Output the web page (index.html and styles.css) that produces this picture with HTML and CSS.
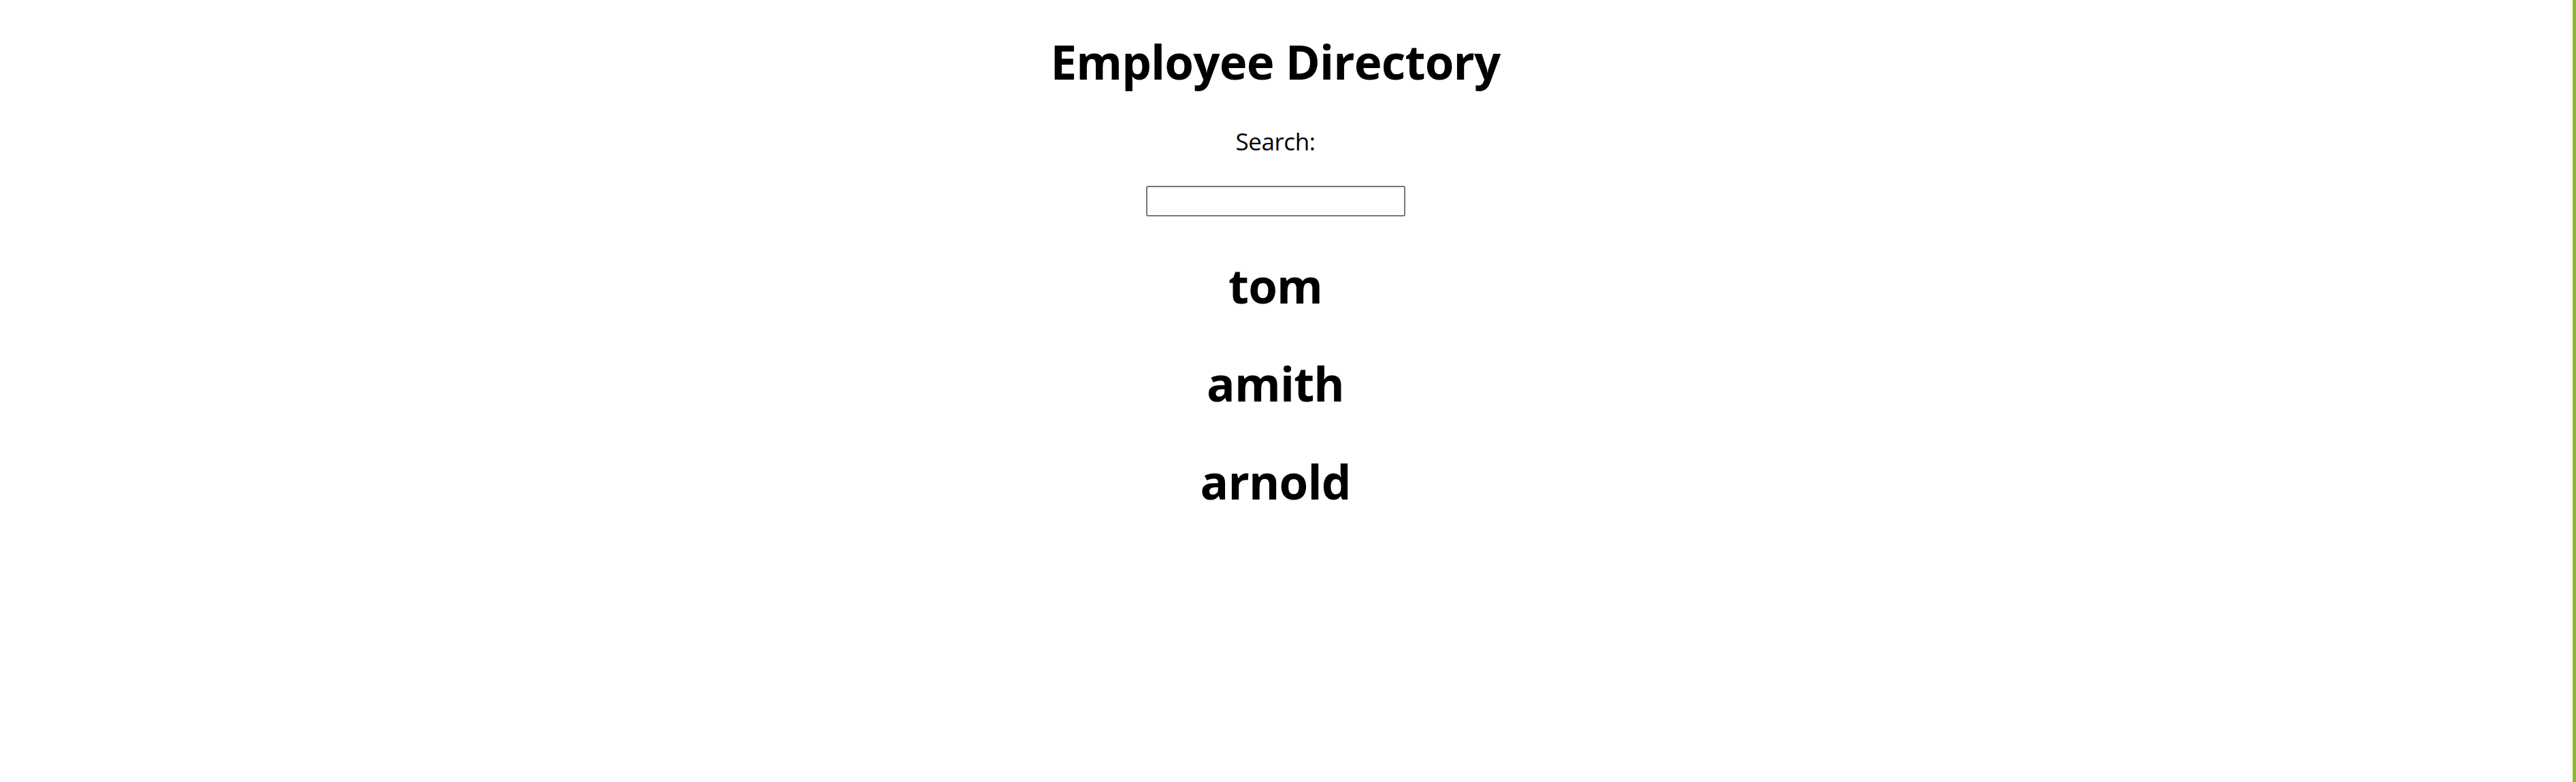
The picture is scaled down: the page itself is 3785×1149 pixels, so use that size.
FILE: index.html
```html
<!DOCTYPE html>
<html lang="en">
<head>
<meta charset="utf-8">
<title>Employee Directory</title>
<link rel="stylesheet" href="styles.css">
</head>
<body>
<div class="page">
  <h1 class="title">Employee Directory</h1>
  <label class="search-label" for="search">Search:</label>
  <input class="search-input" id="search" type="text">
  <div class="names">
    <h1 class="name">tom</h1>
    <h1 class="name">amith</h1>
    <h1 class="name">arnold</h1>
  </div>
</div>
<div class="edge"></div>
</body>
</html>
```
FILE: styles.css
```css
html, body {
  margin: 0;
  padding: 0;
  height: 100%;
  background: #ffffff;
}
body {
  display: flex;
  font-family: "Open Sans", "Noto Sans", sans-serif;
  color: #000000;
}
.page {
  flex: 1;
  display: flex;
  flex-direction: column;
  align-items: center;
  padding: 55.7px 32px 0 0;
}
.title {
  margin: 0;
  font-size: 69px;
  line-height: 1;
  font-weight: 700;
  letter-spacing: -0.8px;
}
.search-label {
  display: block;
  margin-top: 65.2px;
  font-size: 35px;
  line-height: 1;
  font-weight: 400;
  letter-spacing: -0.4px;
}
.search-input {
  box-sizing: border-box;
  margin: 48.1px 0 0 0;
  width: 381px;
  height: 45px;
  border: 2px solid #767676;
  border-radius: 3px;
  padding: 0 4px;
  font-size: 30px;
  background: #ffffff;
}
.names {
  display: flex;
  flex-direction: column;
  align-items: center;
  gap: 75px;
  margin-top: 66.7px;
}
.name {
  margin: 0;
  font-size: 69px;
  line-height: 1;
  font-weight: 700;
  letter-spacing: -0.8px;
}
.edge {
  width: 5px;
  flex: none;
  background: #8abd2c;
}
```
